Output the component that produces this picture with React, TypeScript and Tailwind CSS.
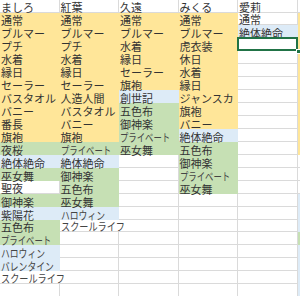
type Fill = "y" | "g" | "b" | "";

const Y: Fill = "y";
const G: Fill = "g";
const B: Fill = "b";
const W: Fill = "";

const headers = ["ましろ", "紅葉", "久遠", "みくる", "愛莉", ""];

const cols: [string, Fill][][] = [
  [
    ["通常", Y], ["ブルマー", Y], ["プチ", Y], ["水着", Y], ["縁日", Y], ["セーラー", Y],
    ["バスタオル", Y], ["バニー", Y], ["番長", Y], ["旗袍", Y], ["夜桜", G], ["絶体絶命", B],
    ["巫女舞", G], ["聖夜", W], ["御神楽", G], ["紫陽花", B], ["五色布", G], ["プライベート", G],
    ["ハロウィン", B], ["バレンタイン", B], ["スクールライフ", W], ["", W],
  ],
  [
    ["通常", Y], ["ブルマー", Y], ["プチ", Y], ["水着", Y], ["縁日", Y], ["セーラー", Y],
    ["人造人間", Y], ["バスタオル", Y], ["バニー", Y], ["旗袍", Y], ["プライベート", G], ["絶体絶命", B],
    ["御神楽", G], ["五色布", G], ["巫女舞", G], ["ハロウィン", B], ["スクールライフ", W],
  ],
  [
    ["通常", Y], ["ブルマー", Y], ["水着", Y], ["縁日", Y], ["セーラー", Y], ["旗袍", Y],
    ["創世記", B], ["五色布", G], ["御神楽", G], ["プライベート", G], ["巫女舞", G],
  ],
  [
    ["通常", Y], ["ブルマー", Y], ["虎衣装", Y], ["休日", Y], ["水着", Y], ["縁日", Y],
    ["ジャンスカ", Y], ["旗袍", Y], ["バニー", Y], ["絶体絶命", B], ["五色布", G], ["御神楽", G],
    ["プライベート", G], ["巫女舞", G],
  ],
  [["通常", W], ["絶体絶命", B]],
  [
    ["", Y], ["", Y], ["", Y], ["", Y], ["", Y], ["", Y], ["", Y], ["", Y], ["", Y], ["", Y], ["", Y],
    ["", W], ["", W], ["", W], ["", B], ["", B], ["", B], ["", G], ["", B], ["", B], ["", B], ["", B],
  ],
];

const fillClass: Record<Fill, string> = {
  y: "bg-[#FFE699]",
  g: "bg-[#C6E0B4]",
  b: "bg-[#DDEBF7]",
  "": "border-r border-b border-[#DADADA]",
};

// these were typed in a narrower face in the sheet
const narrow: Record<string, string> = {
  プライベート: "inline-block origin-left scale-x-[0.76] text-[#444]",
  ハロウィン: "inline-block origin-left scale-x-[0.8] text-[#444]",
  バレンタイン: "inline-block origin-left scale-x-[0.8] text-[#444]",
  スクールライフ: "inline-block origin-left scale-x-[0.83] text-[#444]",
};

const ROWS = 22;

export default function App() {
  const cells = [];
  for (let c = 0; c < 6; c++) {
    cells.push(
      <div
        key={`h${c}`}
        style={{ gridColumn: c + 1, gridRow: 1 }}
        className="flex items-end pl-[1px] whitespace-nowrap border-r border-b border-[#DADADA] bg-white"
      >
        <span className="relative top-[1px]">{headers[c]}</span>
      </div>
    );
  }
  for (let r = 0; r < ROWS; r++) {
    for (let c = 0; c < 6; c++) {
      const [text, fill] = cols[c][r] ?? ["", W];
      // Excel lets text spill only into an empty neighbour
      const next = cols[c + 1]?.[r];
      const spills = fill === W && (!next || next[0] === "") && text.length > 4;
      const selected = c === 4 && r === 2;
      cells.push(
        <div
          key={`${r}-${c}`}
          style={{ gridColumn: c + 1, gridRow: r + 2 }}
          className={`relative flex items-end pl-[1px] whitespace-nowrap ${fillClass[fill]} ${spills ? "border-r-0" : ""}`}
        >
          <span className={`relative z-10 top-[1px] ${narrow[text] ?? ""}`}>{text}</span>
          {selected && (
            <>
              <div className="absolute z-20 -left-[1px] -top-[1px] -right-[1px] -bottom-[1px] border-2 border-[#217346]" />
              <div className="absolute z-20 -right-[4px] -bottom-[4px] w-[5px] h-[5px] bg-[#217346] border border-white" />
            </>
          )}
        </div>
      );
    }
  }
  return (
    <div className="w-[300px] h-[296px] overflow-hidden bg-white">
      <div
        className="grid grid-cols-[repeat(5,59.5px)_20px] grid-rows-[12.5px_repeat(22,12.95px)] text-[11px] leading-[11px] text-[#333]"
        style={{ fontFamily: '"Noto Sans CJK JP", sans-serif' }}
      >
        {cells}
      </div>
    </div>
  );
}
